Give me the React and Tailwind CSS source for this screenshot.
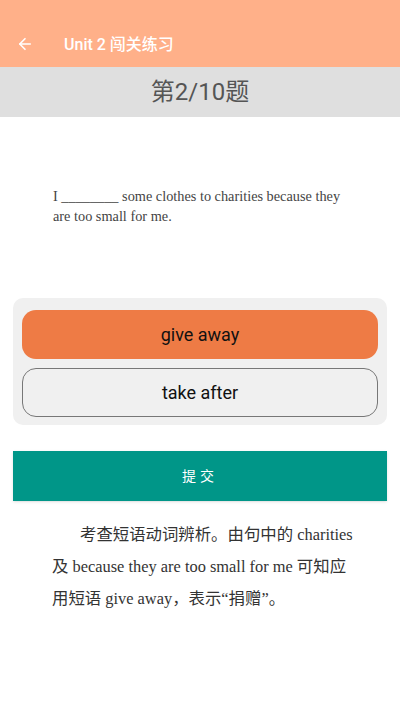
import { ArrowLeft } from "lucide-react";

const sans = { fontFamily: 'Roboto, "Noto Sans CJK SC", sans-serif' };
const serif = { fontFamily: '"Liberation Serif", "Noto Sans CJK SC", serif' };

export default function App() {
  return (
    <div className="w-[400px] h-[711px] bg-white flex flex-col" style={sans}>
      {/* Toolbar */}
      <div className="h-[67px] bg-[#ffb089] flex items-end pb-[14px] px-4 shadow-sm">
        <ArrowLeft className="w-[18px] h-[18px] text-white" strokeWidth={2.2} />
        <span className="ml-[30px] text-white text-[16px] font-medium leading-none">Unit 2 闯关练习</span>
      </div>

      {/* Question number */}
      <div className="h-[50px] bg-[#dfdfdf] flex items-center justify-center">
        <span className="text-[24px] text-[#555]">第2/10题</span>
      </div>

      {/* Question */}
      <div className="pt-[69px] pl-[53px] pr-[30px] text-[14.3px] leading-[20px] text-[#444] whitespace-nowrap" style={serif}>
        <p>I ________ some clothes to charities because they</p>
        <p>are too small for me.</p>
      </div>

      {/* Options */}
      <div className="mx-[13px] mt-[72px] bg-[#f0f0f0] rounded-[10px] px-[9px] pt-[12px] pb-[8px] flex flex-col gap-[9px]">
        <div className="h-[49px] rounded-[14px] bg-[#ee7b45] flex items-center justify-center text-[18px] text-[#111]">
          give away
        </div>
        <div className="h-[49px] rounded-[14px] border-[1.5px] border-[#777] flex items-center justify-center text-[18px] text-[#111]">
          take after
        </div>
      </div>

      {/* Submit */}
      <div className="mx-[13px] mt-[26px] h-[50px] bg-[#009688] flex items-center justify-center text-white text-[14px] tracking-[4px] shadow">
        提交
      </div>

      {/* Explanation */}
      <div className="pt-[18px] pl-[52px] pr-[20px] text-[16.4px] leading-[32px] text-[#333] whitespace-nowrap" style={serif}>
        <p className="pl-[28px]">考查短语动词辨析。由句中的 charities</p>
        <p>及 because they are too small for me 可知应</p>
        <p>用短语 give away，表示“捐赠”。</p>
      </div>
    </div>
  );
}
